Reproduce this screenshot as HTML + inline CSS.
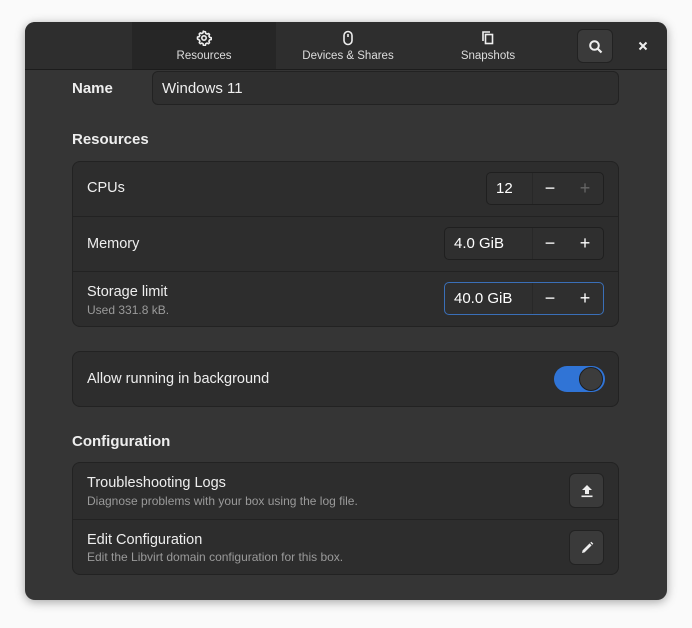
<!DOCTYPE html>
<html><head><style>
*{box-sizing:border-box;margin:0;padding:0}
body{width:692px;height:628px;background:#fafafa;font-family:"Liberation Sans","DejaVu Sans",sans-serif;color:#fff;position:relative;overflow:hidden}
.win{position:absolute;left:25px;top:22px;width:642px;height:578px;background:#353535;border-radius:10px;box-shadow:0 2px 10px rgba(0,0,0,.35);overflow:hidden}
.hdr{position:absolute;left:0;top:0;width:642px;height:48px;background:#2e2e2e;border-bottom:1px solid #1c1c1c}
.tab{position:absolute;top:0;height:47px;text-align:center;font-size:11.5px;color:#ddd}
.tab .lbl{position:absolute;top:28px;left:0;right:0}
.tab svg{position:absolute;top:8px;left:50%;margin-left:-8px}
.abs{position:absolute}
.box{position:absolute;background:#2d2d2d;border:1px solid #222;border-radius:8px;left:47px;width:547px}
.row{position:absolute;left:0;width:100%;border-top:1px solid #222}
.t{position:absolute;font-size:14.5px;color:#eee}
.s{position:absolute;font-size:12px;color:#9a9a9a}
.h{position:absolute;font-size:15px;font-weight:bold;color:#eee}
.spin{position:absolute;border:1px solid #1f1f1f;background:#2f2f2f;border-radius:5px;height:33px;font-size:15px}
.spin .v{position:absolute;left:9px;top:7px}
.spin .sep{position:absolute;top:0;bottom:0;width:1px;background:#282828}
.spin .b{position:absolute;top:5px;font-size:18px;width:20px;text-align:center}
.btn{position:absolute;width:35px;height:35px;background:#3a3a3a;border:1px solid #222;border-radius:6px}
</style></head><body>
<div class="win">
 <div class="hdr">
  <div class="tab" style="left:107px;width:144px;background:#262626">
   <svg width="16" height="16" viewBox="0 0 16 16"><path d="M8 1.5l1.4.3.3 1.6 1.3.7 1.5-.6 1 1-.6 1.5.7 1.3 1.6.3v2l-1.6.3-.7 1.3.6 1.5-1 1-1.5-.6-1.3.7-.3 1.6h-2l-.3-1.6-1.3-.7-1.5.6-1-1 .6-1.5-.7-1.3L1.5 9V7l1.6-.3.7-1.3-.6-1.5 1-1 1.5.6 1.3-.7.3-1.6z" fill="none" stroke="#eee" stroke-width="1.6" stroke-linejoin="round"/><circle cx="8" cy="8" r="2.2" fill="none" stroke="#eee" stroke-width="1.6"/></svg>
   <div class="lbl">Resources</div></div>
  <div class="tab" style="left:251px;width:144px">
   <svg width="16" height="16" viewBox="0 0 16 16"><rect x="4" y="1.5" width="8" height="13" rx="4" fill="none" stroke="#eee" stroke-width="1.6"/><path d="M8 4v3" stroke="#eee" stroke-width="1.6"/></svg>
   <div class="lbl">Devices &amp; Shares</div></div>
  <div class="tab" style="left:395px;width:136px">
   <svg width="16" height="16" viewBox="0 0 16 16"><path d="M3 11V2h7" fill="none" stroke="#eee" stroke-width="1.6"/><rect x="5.5" y="4.5" width="7" height="9" fill="none" stroke="#eee" stroke-width="1.6"/></svg>
   <div class="lbl">Snapshots</div></div>
  <div class="btn" style="left:552px;top:7px;width:36px;height:34px"><svg class="abs" style="left:10px;top:9px" width="16" height="16" viewBox="0 0 16 16"><circle cx="6.5" cy="6.5" r="4.3" fill="none" stroke="#eee" stroke-width="2"/><path d="M9.5 9.5l4 4" stroke="#eee" stroke-width="2.2"/></svg></div>
  <svg class="abs" style="left:613px;top:19px" width="10" height="10" viewBox="0 0 10 10"><path d="M1.5 1.5l7 7M8.5 1.5l-7 7" stroke="#eee" stroke-width="2"/></svg>
 </div>
 <div class="h" style="left:47px;top:58px">Name</div>
 <div class="abs" style="left:127px;top:49px;width:467px;height:34px;background:#2f2f2f;border:1px solid #222;border-radius:6px"><span class="abs" style="left:9px;top:8px;font-size:15px;color:#eee">Windows 11</span></div>
 <div class="h" style="left:47px;top:109px">Resources</div>
 <div class="box" style="top:139px;height:166px">
  <div class="t" style="left:14px;top:18px">CPUs</div>
  <div class="spin" style="left:413px;top:10px;width:118px"><span class="v">12</span><div class="sep" style="left:45px"></div><span class="b" style="left:53px">−</span><span class="b" style="left:88px;color:#666">+</span></div>
  <div class="row" style="top:54px;height:55px">
   <div class="t" style="left:14px;top:19px">Memory</div>
   <div class="spin" style="left:371px;top:10px;width:160px"><span class="v">4.0 GiB</span><div class="sep" style="left:87px"></div><span class="b" style="left:95px">−</span><span class="b" style="left:130px">+</span></div>
  </div>
  <div class="row" style="top:109px;height:56px">
   <div class="t" style="left:14px;top:12px">Storage limit</div>
   <div class="s" style="left:14px;top:31px">Used 331.8 kB.</div>
   <div class="spin" style="left:371px;top:10px;width:160px;border:1px solid #3a6fb8"><span class="v">40.0 GiB</span><div class="sep" style="left:87px"></div><span class="b" style="left:95px">−</span><span class="b" style="left:130px">+</span></div>
  </div>
 </div>
 <div class="box" style="top:329px;height:56px">
  <div class="t" style="left:14px;top:19px">Allow running in background</div>
  <div class="abs" style="left:481px;top:14px;width:51px;height:26px;border-radius:13px;background:#3074d6"><div class="abs" style="left:25px;top:1px;width:24px;height:24px;border-radius:12px;background:#3c3c3c;border:1px solid #1e1e1e"></div></div>
 </div>
 <div class="h" style="left:47px;top:411px">Configuration</div>
 <div class="box" style="top:440px;height:113px">
  <div class="t" style="left:14px;top:12px">Troubleshooting Logs</div>
  <div class="s" style="left:14px;top:31px">Diagnose problems with your box using the log file.</div>
  <div class="btn" style="left:496px;top:10px"><svg class="abs" style="left:9px;top:9px" width="16" height="16" viewBox="0 0 16 16"><path d="M8 2l5 5H10v4H6V7H3z" fill="#eee"/><rect x="2.5" y="12.5" width="11" height="1.6" fill="#eee"/></svg></div>
  <div class="row" style="top:56px;height:56px">
   <div class="t" style="left:14px;top:12px">Edit Configuration</div>
   <div class="s" style="left:14px;top:30px">Edit the Libvirt domain configuration for this box.</div>
   <div class="btn" style="left:496px;top:10px"><svg class="abs" style="left:9px;top:9px" width="16" height="16" viewBox="0 0 16 16"><path d="M3 13l.6-2.6 7-7 2 2-7 7z" fill="#eee"/><path d="M11.3 2.7l1-1 2 2-1 1z" fill="#eee"/></svg></div>
  </div>
 </div>
</div>
</body></html>
